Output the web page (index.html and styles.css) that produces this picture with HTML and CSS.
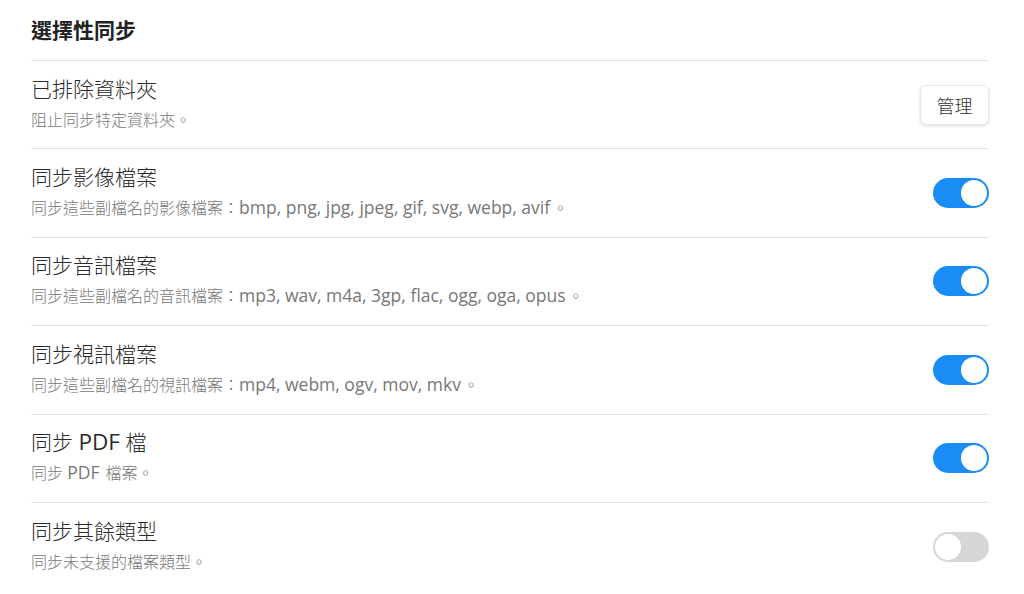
FILE: index.html
```html
<!DOCTYPE html>
<html lang="zh-Hant">
<head>
<meta charset="utf-8">
<link rel="stylesheet" href="styles.css">
</head>
<body>
<div class="panel">
  <h2 class="heading">選擇性同步</h2>
  <div class="row">
    <div class="info">
      <div class="title">已排除資料夾</div>
      <div class="desc">阻止同步特定資料夾。</div>
    </div>
    <button class="btn">管理</button>
  </div>
  <div class="row">
    <div class="info">
      <div class="title">同步影像檔案</div>
      <div class="desc">同步這些副檔名的影像檔案：<span class="en">bmp, png, jpg, jpeg, gif, svg, webp, avif</span>。</div>
    </div>
    <div class="toggle on"><span class="knob"></span></div>
  </div>
  <div class="row">
    <div class="info">
      <div class="title">同步音訊檔案</div>
      <div class="desc">同步這些副檔名的音訊檔案：<span class="en">mp3, wav, m4a, 3gp, flac, ogg, oga, opus</span>。</div>
    </div>
    <div class="toggle on"><span class="knob"></span></div>
  </div>
  <div class="row">
    <div class="info">
      <div class="title">同步視訊檔案</div>
      <div class="desc">同步這些副檔名的視訊檔案：<span class="en">mp4, webm, ogv, mov, mkv</span>。</div>
    </div>
    <div class="toggle on"><span class="knob"></span></div>
  </div>
  <div class="row">
    <div class="info">
      <div class="title">同步 <span class="en">PDF</span> 檔</div>
      <div class="desc">同步 <span class="en">PDF</span> 檔案。</div>
    </div>
    <div class="toggle on"><span class="knob"></span></div>
  </div>
  <div class="row last">
    <div class="info">
      <div class="title">同步其餘類型</div>
      <div class="desc">同步未支援的檔案類型。</div>
    </div>
    <div class="toggle"><span class="knob"></span></div>
  </div>
</div>
</body>
</html>
```

FILE: styles.css
```css
* { box-sizing: border-box; }
html, body {
  margin: 0;
  padding: 0;
  background: #ffffff;
}
body {
  font-family: "Open Sans", "Noto Sans CJK TC", sans-serif;
  color: #222222;
}
.panel {
  width: 958px;
  margin-left: 31px;
}
.heading {
  margin: 0;
  font-size: 21px;
  font-weight: 700;
  line-height: 28px;
  padding: 16px 0 0;
  height: 61px;
  border-bottom: 1px solid #e2e2e2;
  color: #222;
}
.row {
  display: flex;
  align-items: center;
  justify-content: space-between;
  height: 88.4px;
  border-bottom: 1px solid #e2e2e2;
}
.row.last { border-bottom: none; }
.title {
  font-size: 21px;
  line-height: 22px;
  height: 22px;
  font-weight: 300;
  color: #2a2a2a;
  margin-top: -2px;
}
.desc {
  margin-top: 10px;
  font-size: 16px;
  line-height: 20px;
  height: 20px;
  font-weight: 300;
  color: #777777;
}
.en {
  line-height: 1;
  font-weight: 400;
}
.title .en {
  font-size: 22.5px;
}
.desc .en {
  font-size: 17.5px;
  margin-right: 2px;
}
.btn {
  font-family: "Open Sans", "Noto Sans CJK TC", sans-serif;
  font-size: 18px;
  font-weight: 300;
  color: #333;
  width: 69px;
  height: 40px;
  background: #fff;
  border: 1px solid #e6e6e6;
  border-radius: 6px;
  box-shadow: 0 1px 3px rgba(0,0,0,0.15);
  padding: 0;
}
.toggle {
  width: 56px;
  height: 30px;
  border-radius: 15px;
  background: #d6d6d6;
  padding: 2px;
  display: flex;
  justify-content: flex-start;
  flex-shrink: 0;
}
.toggle.on {
  background: #1a8cf5;
  justify-content: flex-end;
}
.knob {
  width: 26px;
  height: 26px;
  border-radius: 50%;
  background: #fff;
}
```
